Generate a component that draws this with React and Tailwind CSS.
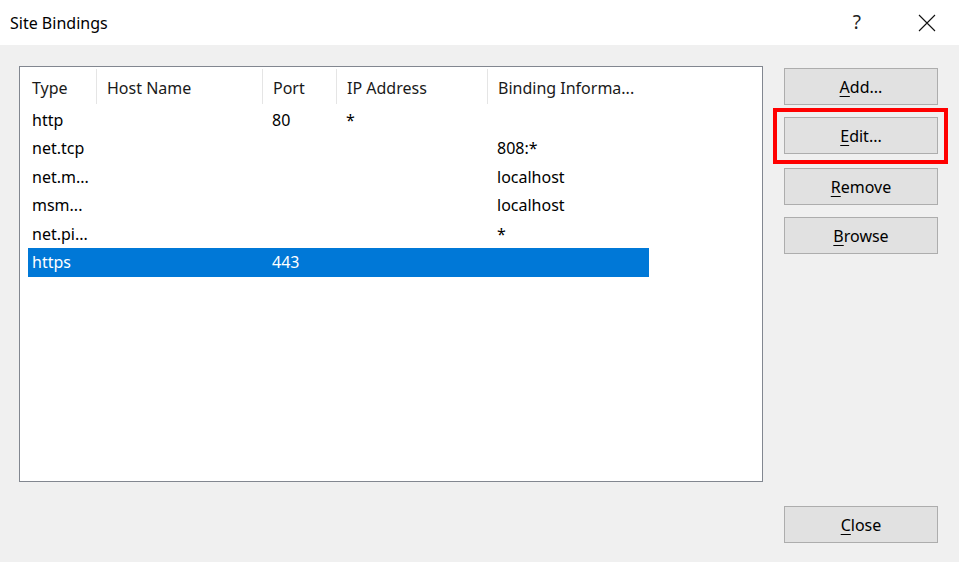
const columns = [
  { label: "Type", width: "w-[68px]", first: true },
  { label: "Host Name", width: "w-[166px]" },
  { label: "Port", width: "w-[74px]" },
  { label: "IP Address", width: "w-[151px]" },
  { label: "Binding Informa...", width: "w-[162px]" },
];

const rows = [
  ["http", "", "80", "*", ""],
  ["net.tcp", "", "", "", "808:*"],
  ["net.m...", "", "", "", "localhost"],
  ["msm...", "", "", "", "localhost"],
  ["net.pi...", "", "", "", "*"],
  ["https", "", "443", "", ""],
];

function DialogButton({ letter, rest }) {
  return (
    <button className="w-[154px] h-[37px] bg-[#e1e1e1] border border-[#adadad] text-[16px] text-black flex items-center justify-center">
      <span className="underline underline-offset-[3px] decoration-1">{letter}</span>
      <span>{rest}</span>
    </button>
  );
}

export default function App() {
  const font = { fontFamily: '"Noto Sans", "Open Sans", sans-serif' };

  return (
    <div className="w-[959px] h-[562px] flex flex-col bg-[#f0f0f0] overflow-hidden" style={font}>
      {/* title bar */}
      <div className="h-[45px] bg-white flex items-center pl-[10px] shrink-0">
        <span className="text-[16px] text-black flex-1">Site Bindings</span>
        <span className="text-[19px] text-[#222] mr-[57px]">?</span>
        <svg width="18" height="18" viewBox="0 0 18 18" className="mr-[23px]">
          <path d="M1 1 L17 17 M17 1 L1 17" stroke="#111" strokeWidth="1.1" />
        </svg>
      </div>

      {/* body */}
      <div className="flex-1 flex">
        <div className="ml-[19px] mt-[21px] w-[744px] h-[416px] bg-white border border-[#828790] pl-[8px] pt-[1px]">
          <div className="flex h-[37.5px] items-center">
            {columns.map((c) => (
              <div
                key={c.label}
                className={`${c.width} h-[35px] flex items-center pt-[2px] text-[16px] text-[#1a1a1a] ${
                  c.first ? "pl-[4px]" : "border-l border-[#e5e5e5] pl-[10px]"
                }`}
              >
                {c.label}
              </div>
            ))}
          </div>
          {rows.map((r, i) => {
            const sel = i === rows.length - 1;
            return (
              <div
                key={i}
                className={`flex h-[28.5px] w-[621px] items-center text-[16px] ${
                  sel ? "bg-[#0078d7] text-white" : "text-black"
                }`}
              >
                {r.map((cell, j) => (
                  <div
                    key={j}
                    className={`${columns[j].width} ${j === 0 ? "pl-[4px]" : "pl-[10px]"} whitespace-nowrap`}
                  >
                    {cell}
                  </div>
                ))}
              </div>
            );
          })}
        </div>

        <div className="ml-[21px] mt-[23px] flex flex-col">
          <DialogButton letter="A" rest="dd..." />
          <div className="relative mt-[12px]">
            <div className="absolute left-[-11px] right-[-10px] top-[-9px] bottom-[-10px] border-[4px] border-[#ff0000]" />
            <DialogButton letter="E" rest="dit..." />
          </div>
          <div className="mt-[14px]">
            <DialogButton letter="R" rest="emove" />
          </div>
          <div className="mt-[12px]">
            <DialogButton letter="B" rest="rowse" />
          </div>
          <div className="mt-[252px]">
            <DialogButton letter="C" rest="lose" />
          </div>
        </div>
      </div>
    </div>
  );
}
